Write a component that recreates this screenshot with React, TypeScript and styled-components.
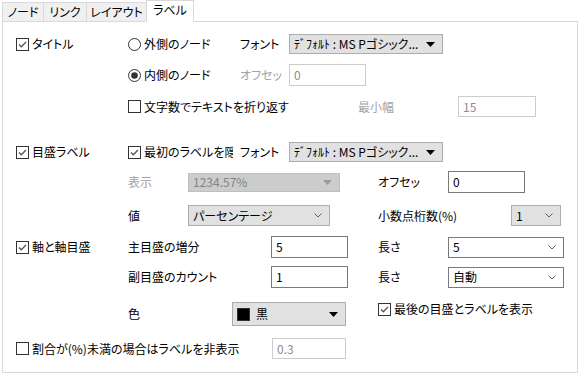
import styled, { createGlobalStyle } from 'styled-components';

const GlobalStyle = createGlobalStyle`
  html, body {
    margin: 0;
    padding: 0;
    background: #fff;
  }
  body {
    font-family: "Noto Sans CJK JP", "Noto Sans", sans-serif;
    font-size: 12px;
    color: #000;
    font-feature-settings: "palt";
  }
`;

const Window = styled.div`
  width: 581px;
  height: 375px;
  box-sizing: border-box;
  padding: 0 3px 2px 2px;
  display: flex;
  flex-direction: column;
`;

const TabStrip = styled.div`
  display: flex;
  align-items: flex-end;
  height: 21px;
  position: relative;
  z-index: 1;
`;

const Tab = styled.div<{ $w: number; $active?: boolean }>`
  width: ${p => p.$w}px;
  height: ${p => (p.$active ? 22 : 19)}px;
  margin-bottom: ${p => (p.$active ? -1 : 0)}px;
  margin-right: -1px;
  box-sizing: border-box;
  border: 1px solid #d9d9d9;
  border-bottom: none;
  background: ${p => (p.$active ? '#fff' : '#f0f0f0')};
  display: flex;
  align-items: center;
  justify-content: center;
  padding-bottom: ${p => (p.$active ? 3 : 1)}px;
  line-height: 16px;
`;

const Panel = styled.div`
  flex: 1;
  border: 1px solid #d9d9d9;
  background: #fff;
  padding: 12px 0 0 13px;
  display: flex;
  flex-direction: column;
`;

const Row = styled.div<{ $h: number; $mt: number }>`
  display: flex;
  align-items: center;
  height: ${p => p.$h}px;
  margin-top: ${p => p.$mt}px;
`;

const Spacer = styled.div<{ $w: number }>`
  width: ${p => p.$w}px;
  flex-shrink: 0;
`;

const Label = styled.div<{ $w: number; $muted?: boolean }>`
  width: ${p => p.$w}px;
  flex-shrink: 0;
  white-space: nowrap;
  line-height: 16px;
  color: ${p => (p.$muted ? '#a3a3a3' : '#000')};
`;

const OptionItem = styled.label<{ $w: number; $top?: boolean }>`
  width: ${p => p.$w}px;
  flex-shrink: 0;
  display: flex;
  align-items: center;
  gap: 3px;
  white-space: nowrap;
  line-height: 16px;
  align-self: ${p => (p.$top ? 'flex-start' : 'center')};
  margin-top: ${p => (p.$top ? -1 : 0)}px;

  svg {
    flex-shrink: 0;
  }
`;

// the caption of this one is cut by the next column, as in the dialog
const ClippedText = styled.span<{ $w: number }>`
  display: block;
  width: ${p => p.$w}px;
  overflow: hidden;
`;

const TextBox = styled.div<{ $w: number; $h: number; $disabled?: boolean }>`
  width: ${p => p.$w}px;
  height: ${p => p.$h}px;
  flex-shrink: 0;
  box-sizing: border-box;
  border: 1px solid ${p => (p.$disabled ? '#cccccc' : '#7a7a7a')};
  background: #fff;
  color: ${p => (p.$disabled ? '#8d8d8d' : '#000')};
  display: flex;
  align-items: center;
  padding-left: 4px;
  line-height: 16px;
`;

const comboBg = { button: '#e1e1e1', white: '#fff', disabled: '#cccccc' };
const comboBorder = { button: '#adadad', white: '#7a7a7a', disabled: '#bfbfbf' };

type ComboKind = 'button' | 'white' | 'disabled';

const Combo = styled.div<{ $w: number; $h: number; $kind: ComboKind }>`
  width: ${p => p.$w}px;
  height: ${p => p.$h}px;
  flex-shrink: 0;
  box-sizing: border-box;
  border: 1px solid ${p => comboBorder[p.$kind]};
  background: ${p => comboBg[p.$kind]};
  color: ${p => (p.$kind === 'disabled' ? '#838383' : '#000')};
  display: flex;
  align-items: center;
  justify-content: space-between;
  padding: 0 7px 0 4px;
  line-height: 16px;
  white-space: nowrap;
`;

const ComboText = styled.span`
  display: flex;
  align-items: center;
  gap: 6px;
`;

const Swatch = styled.span`
  width: 13px;
  height: 13px;
  background: #000;
  border: 1px solid #333;
  box-sizing: border-box;
`;

const CheckBox = ({ checked }: { checked?: boolean }) => (
  <svg width="13" height="13" viewBox="0 0 13 13">
    <rect x="0.5" y="0.5" width="12" height="12" fill="#fff" stroke="#333" />
    {checked && (
      <path d="M3 6.5 L5.3 8.8 L10 4" stroke="#555" strokeWidth="1.3" fill="none" />
    )}
  </svg>
);

const Radio = ({ checked }: { checked?: boolean }) => (
  <svg width="13" height="13" viewBox="0 0 13 13">
    <circle cx="6.5" cy="6.5" r="6" fill="#fff" stroke="#333" />
    {checked && <circle cx="6.5" cy="6.5" r="3.3" fill="#333" />}
  </svg>
);

const Triangle = ({ color = '#000' }: { color?: string }) => (
  <svg width="9" height="5" viewBox="0 0 9 5">
    <path d="M0 0 H9 L4.5 5 Z" fill={color} />
  </svg>
);

const Chevron = () => (
  <svg width="8" height="5" viewBox="0 0 8 5">
    <path d="M0.5 0.5 L4 4 L7.5 0.5" stroke="#606060" fill="none" />
  </svg>
);

const FontCombo = () => (
  <Combo $w={154} $h={20} $kind="button">
    <ComboText>ﾃﾞﾌｫﾙﾄ : MS Pゴシック...</ComboText>
    <Triangle />
  </Combo>
);

export default function App() {
  return (
    <>
      <GlobalStyle />
      <Window>
        <TabStrip>
          <Tab $w={42}>ノード</Tab>
          <Tab $w={44}>リンク</Tab>
          <Tab $w={61}>レイアウト</Tab>
          <Tab $w={48} $active>ラベル</Tab>
        </TabStrip>
        <Panel>
          <Row $h={20} $mt={0}>
            <OptionItem $w={112}><CheckBox checked />タイトル</OptionItem>
            <OptionItem $w={112}><Radio />外側のノード</OptionItem>
            <Label $w={49}>フォント</Label>
            <FontCombo />
          </Row>
          <Row $h={22} $mt={10}>
            <Spacer $w={112} />
            <OptionItem $w={112}><Radio checked />内側のノード</OptionItem>
            <Label $w={49} $muted>オフセッ</Label>
            <TextBox $w={77} $h={22} $disabled>0</TextBox>
          </Row>
          <Row $h={21} $mt={10}>
            <Spacer $w={112} />
            <OptionItem $w={230}><CheckBox />文字数でテキストを折り返す</OptionItem>
            <Label $w={100} $muted>最小幅</Label>
            <TextBox $w={78} $h={21} $disabled>15</TextBox>
          </Row>
          <Row $h={20} $mt={25}>
            <OptionItem $w={112}><CheckBox checked />目盛ラベル</OptionItem>
            <OptionItem $w={112}>
              <CheckBox checked />
              <ClippedText $w={89}>最初のラベルを隠す</ClippedText>
            </OptionItem>
            <Label $w={49}>フォント</Label>
            <FontCombo />
          </Row>
          <Row $h={20} $mt={10}>
            <Spacer $w={112} />
            <Label $w={60} $muted>表示</Label>
            <Combo $w={152} $h={19} $kind="disabled">
              <ComboText>1234.57%</ComboText>
              <Triangle color="#9a9a9a" />
            </Combo>
            <Spacer $w={38} />
            <Label $w={70}>オフセッ</Label>
            <TextBox $w={77} $h={22}>0</TextBox>
          </Row>
          <Row $h={21} $mt={13}>
            <Spacer $w={112} />
            <Label $w={60}>値</Label>
            <Combo $w={142} $h={21} $kind="button">
              <ComboText>パーセンテージ</ComboText>
              <Chevron />
            </Combo>
            <Spacer $w={48} />
            <Label $w={133}>小数点桁数(%)</Label>
            <Combo $w={50} $h={21} $kind="button">
              <ComboText>1</ComboText>
              <Chevron />
            </Combo>
          </Row>
          <Row $h={22} $mt={10}>
            <OptionItem $w={112}><CheckBox checked />軸と軸目盛</OptionItem>
            <Label $w={143}>主目盛の増分</Label>
            <TextBox $w={77} $h={22}>5</TextBox>
            <Spacer $w={30} />
            <Label $w={70}>長さ</Label>
            <Combo $w={116} $h={21} $kind="white">
              <ComboText>5</ComboText>
              <Chevron />
            </Combo>
          </Row>
          <Row $h={22} $mt={8}>
            <Spacer $w={112} />
            <Label $w={143}>副目盛のカウント</Label>
            <TextBox $w={77} $h={22}>1</TextBox>
            <Spacer $w={30} />
            <Label $w={70}>長さ</Label>
            <Combo $w={116} $h={21} $kind="white">
              <ComboText>自動</ComboText>
              <Chevron />
            </Combo>
          </Row>
          <Row $h={24} $mt={14}>
            <Spacer $w={112} />
            <Label $w={104}>色</Label>
            <Combo $w={114} $h={24} $kind="button">
              <ComboText><Swatch />黒</ComboText>
              <Triangle />
            </Combo>
            <Spacer $w={32} />
            <OptionItem $w={180} $top><CheckBox checked />最後の目盛とラベルを表示</OptionItem>
          </Row>
          <Row $h={21} $mt={12}>
            <OptionItem $w={256}><CheckBox />割合が(%)未満の場合はラベルを非表示</OptionItem>
            <TextBox $w={74} $h={21} $disabled>0.3</TextBox>
          </Row>
        </Panel>
      </Window>
    </>
  );
}
